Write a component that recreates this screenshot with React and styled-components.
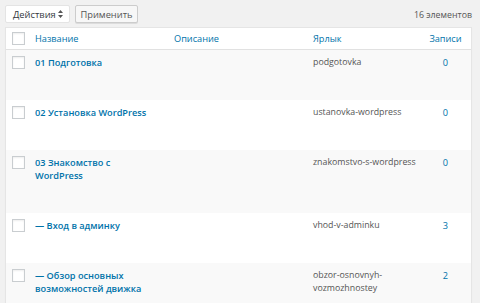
import React from "react";
import styled, { createGlobalStyle } from "styled-components";

const GlobalStyle = createGlobalStyle`
	html, body {
		margin: 0;
		padding: 0;
		background: #f1f1f1;
		font-family: "Open Sans", "Liberation Sans", sans-serif;
		color: #444;
	}
`;

const Page = styled.div`
	padding: 5px 8px 0 5px;
	width: 480px;
	box-sizing: border-box;
`;

const TopBar = styled.div`
	display: flex;
	align-items: center;
	gap: 5px;
	height: 18px;
	margin-bottom: 4px;
`;

const Select = styled.div`
	display: flex;
	align-items: center;
	justify-content: space-between;
	box-sizing: border-box;
	width: 65px;
	height: 18px;
	padding: 0 6px 0 7px;
	background: #fff;
	border: 1px solid #e4e4e4;
	border-radius: 2px;
	font-size: 9.3px;
	color: #32373c;
`;

const Arrows = styled.svg`
	width: 5px;
	height: 8px;
`;

const Button = styled.div`
	display: flex;
	align-items: center;
	justify-content: center;
	box-sizing: border-box;
	width: 63px;
	height: 18px;
	background: #f7f7f7;
	border: 1px solid #cccccc;
	border-radius: 2px;
	box-shadow: 0 1px 0 #dcdcdc;
	font-size: 9.3px;
	color: #555;
`;

const Count = styled.div`
	margin-left: auto;
	font-size: 8.8px;
	color: #555;
	padding-top: 1px;
`;

const Table = styled.div`
	background: #fff;
	border: 1px solid #e5e5e5;
	border-bottom: none;
	box-shadow: 0 1px 1px rgba(0, 0, 0, 0.04);
`;

const Row = styled.div`
	display: grid;
	grid-template-columns: 22px 139px 139px 1fr 51px;
	background: ${(p) => (p.striped ? "#f9f9f9" : "#fff")};
	padding: ${(p) => (p.head ? "0" : "6px 0 31px")};
	height: ${(p) => (p.head ? "21px" : "auto")};
	align-items: ${(p) => (p.head ? "center" : "start")};
	border-bottom: ${(p) => (p.head ? "1px solid #e1e1e1" : "none")};
`;

const CheckCell = styled.div`
	display: flex;
	justify-content: flex-end;
`;

const Checkbox = styled.div`
	width: 11px;
	height: 11px;
	margin-right: 3px;
	background: #fff;
	border: 1px solid #c9cdd0;
	box-shadow: inset 0 1px 2px rgba(0, 0, 0, 0.07);
`;

const Cell = styled.div`
	padding: 0 ${(p) => p.pr ?? 6}px 0 ${(p) => (p.center ? 0 : 7)}px;
	font-size: ${(p) => (p.small ? "8.8px" : "9.2px")};
	line-height: 13px;
	color: ${(p) => (p.link ? "#0073aa" : "#555")};
	font-weight: ${(p) => (p.bold ? 600 : 400)};
	text-align: ${(p) => (p.center ? "center" : "left")};
`;

const rows = [
	{ name: "01 Подготовка", slug: "podgotovka", count: 0 },
	{ name: "02 Установка WordPress", slug: "ustanovka-wordpress", count: 0 },
	{ name: "03 Знакомство с WordPress", slug: "znakomstvo-s-wordpress", count: 0 },
	{ name: "— Вход в админку", slug: "vhod-v-adminku", count: 3 },
	{ name: "— Обзор основных возможностей движка", slug: "obzor-osnovnyh-vozmozhnostey", count: 2 },
];

const App = () => {
	return (
		<Page>
			<GlobalStyle />
			<TopBar>
				<Select>
					Действия
					<Arrows viewBox="0 0 5 8">
						<path d="M2.5 0 L5 3 H0 Z M2.5 8 L5 5 H0 Z" fill="#555" />
					</Arrows>
				</Select>
				<Button>Применить</Button>
				<Count>16 элементов</Count>
			</TopBar>
			<Table>
				<Row head>
					<CheckCell>
						<Checkbox />
					</CheckCell>
					<Cell link>Название</Cell>
					<Cell link>Описание</Cell>
					<Cell link>Ярлык</Cell>
					<Cell link center pr={0}>Записи</Cell>
				</Row>
				{rows.map((r, i) => (
					<Row key={r.slug} striped={i % 2 === 0}>
						<CheckCell>
							<Checkbox />
						</CheckCell>
						<Cell link bold pr={18}>{r.name}</Cell>
						<Cell />
						<Cell small pr={0}>{r.slug}</Cell>
						<Cell link center pr={0}>{r.count}</Cell>
					</Row>
				))}
			</Table>
		</Page>
	);
};

export default App;
